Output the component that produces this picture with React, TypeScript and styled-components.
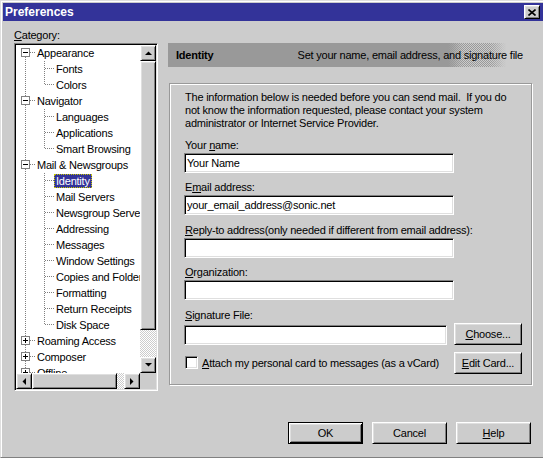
import React from 'react';
import styled, { createGlobalStyle, css } from 'styled-components';

const GlobalStyle = createGlobalStyle`
  html, body {
    margin: 0;
    padding: 0;
    background: #cccccc;
  }
  body {
    font-family: 'Liberation Sans', Arial, sans-serif;
    font-size: 11px;
    letter-spacing: -0.22px;
    color: #000;
  }
`;

const raised = css`
  border: 1px solid;
  border-color: #fff #000 #000 #fff;
  box-shadow: inset 1px 1px #dfdfdf, inset -1px -1px #808080;
`;

const sunken = css`
  border: 1px solid;
  border-color: #808080 #fff #fff #808080;
  box-shadow: inset 1px 1px #000, inset -1px -1px #dfdfdf;
`;

const checker = (a: string, b: string) => css`
  background-color: ${a};
  background-image: repeating-conic-gradient(${a} 0 25%, ${b} 0 50%);
  background-size: 2px 2px;
`;

const Window = styled.div`
  width: 543px;
  height: 458px;
  box-sizing: border-box;
  background: #cccccc;
  border-top: 1px solid #dfdfdf;
  border-left: 1px solid #dfdfdf;
  border-bottom: 1px solid #808080;
  box-shadow: inset 1px 1px #fff;
  padding: 2px 0 0 2px;
  display: flex;
  flex-direction: column;
  overflow: hidden;
`;

const TitleBar = styled.div`
  height: 18px;
  flex: 0 0 18px;
  background: #333399;
  display: flex;
  align-items: center;
  justify-content: space-between;
  padding: 0 3px 0 2px;
`;

const Title = styled.span`
  color: #fff;
  font-weight: bold;
  font-size: 12px;
  letter-spacing: 0;
`;

const CloseButton = styled.div`
  ${raised};
  width: 16px;
  height: 14px;
  box-sizing: border-box;
  background: #cccccc;
  display: flex;
  align-items: center;
  justify-content: center;
`;

const Body = styled.div`
  display: grid;
  grid-template-columns: 144px 364px;
  grid-template-rows: 14px 348px;
  column-gap: 10px;
  padding: 8px 0 0 11px;
`;

const CategoryLabel = styled.div`
  line-height: 13px;
`;

const Mnemonic = styled.u`
  text-decoration-thickness: 1px;
  text-underline-offset: 1px;
`;

/* ---------- category tree ---------- */

const TreeBox = styled.div`
  ${sunken};
  box-sizing: border-box;
  width: 144px;
  height: 348px;
  padding: 1px;
  display: grid;
  grid-template-columns: 124px 16px;
  grid-template-rows: 328px 16px;
`;

const TreeViewport = styled.div`
  background: #fff;
  overflow: hidden;
`;

const TreeRow = styled.div`
  height: 16px;
  display: flex;
  align-items: center;
  white-space: nowrap;
`;

const TreeLabel = styled.span<{ $selected?: boolean }>`
  padding: 0 2px;
  line-height: 14px;
  ${(p) =>
    p.$selected &&
    css`
      background: #333399;
      color: #fff;
      outline: 1px dotted #c8c800;
      outline-offset: -1px;
    `}
`;

const VScroll = styled.div`
  display: flex;
  flex-direction: column;
`;

const HScroll = styled.div`
  display: flex;
`;

const ArrowButton = styled.div`
  ${raised};
  flex: 0 0 16px;
  width: 16px;
  height: 16px;
  box-sizing: border-box;
  background: #cccccc;
  display: flex;
  align-items: center;
  justify-content: center;
`;

const Thumb = styled.div<{ $size: number }>`
  ${raised};
  box-sizing: border-box;
  background: #cccccc;
  flex: 0 0 ${(p) => p.$size}px;
`;

const Track = styled.div`
  flex: 1;
  ${checker('#ffffff', '#cccccc')};
`;

const Corner = styled.div`
  background: #cccccc;
`;

/* ---------- right panel ---------- */

const Panel = styled.div`
  grid-column: 2;
  grid-row: 2;
  display: flex;
  flex-direction: column;
`;

const Header = styled.div`
  position: relative;
  height: 24px;
  display: flex;
  align-items: center;
  justify-content: space-between;
  padding: 0 9px 0 8px;
  background: linear-gradient(to right, #999999 287px, #cccccc 334px);

  &::before {
    content: '';
    position: absolute;
    inset: 0;
    ${checker('#999999', '#cccccc')};
    -webkit-mask-image: linear-gradient(to right, transparent 280px, #000 296px, #000 322px, transparent 338px);
    mask-image: linear-gradient(to right, transparent 280px, #000 296px, #000 322px, transparent 338px);
  }
`;

const HeaderText = styled.span<{ $bold?: boolean }>`
  position: relative;
  font-weight: ${(p) => (p.$bold ? 'bold' : 'normal')};
`;

const GroupBox = styled.div`
  margin: 16px 0 0 1px;
  border: 1px solid #999999;
  box-shadow: inset 1px 1px #fff, 1px 1px #fff;
  padding: 6.5px 9px 10px 14px;
  display: flex;
  flex-direction: column;
`;

const Intro = styled.p`
  margin: 0 0 9px 1px;
  line-height: 13px;
  white-space: nowrap;
`;

const Field = styled.div`
  display: flex;
  flex-direction: column;
  margin-bottom: 8.5px;
`;

const FieldLabel = styled.label`
  display: block;
  line-height: 13px;
  margin: 0 0 1px 1px;
  white-space: nowrap;
`;

const TextBox = styled.input<{ $width: number }>`
  ${sunken};
  box-sizing: border-box;
  width: ${(p) => p.$width}px;
  height: 20px;
  padding: 0 2px;
  margin: 0;
  background: #fff;
  font: inherit;
  letter-spacing: inherit;
  color: #000;
  outline: none;
`;

const InlineRow = styled.div<{ $align?: string; $top?: number }>`
  display: flex;
  align-items: ${(p) => p.$align || 'center'};
  justify-content: space-between;
  margin-top: ${(p) => p.$top || 0}px;
`;

const CheckLabel = styled.label`
  display: flex;
  align-items: center;
  gap: 4px;
  margin-left: 1px;
  white-space: nowrap;
`;

const CheckBox = styled.span`
  ${sunken};
  box-sizing: border-box;
  width: 13px;
  height: 13px;
  background: #fff;
`;

const Button = styled.button<{ $width: number; $default?: boolean }>`
  ${raised};
  box-sizing: border-box;
  width: ${(p) => p.$width}px;
  height: 22px;
  padding: 0;
  background: #cccccc;
  font: inherit;
  letter-spacing: inherit;
  color: #000;
  ${(p) =>
    p.$default &&
    css`
      border: 1px solid #000;
      box-shadow: inset 1px 1px #fff, inset -1px -1px #000, inset 2px 2px #dfdfdf, inset -2px -2px #808080;
    `}
`;

const Footer = styled.div`
  display: flex;
  justify-content: flex-end;
  gap: 9px;
  margin-top: 31px;
  padding-right: 12px;
`;

/* ---------- drawings ---------- */

const Arrow: React.FC<{ dir: 'up' | 'down' | 'left' | 'right' }> = ({ dir }) => {
  const pts = {
    up: '0,4 7,4 3.5,0.5',
    down: '0,0 7,0 3.5,3.5',
    left: '4,0 4,7 0.5,3.5',
    right: '0,0 0,7 3.5,3.5',
  }[dir];
  const vertical = dir === 'up' || dir === 'down';
  return (
    <svg width={vertical ? 7 : 4} height={vertical ? 4 : 7} viewBox={vertical ? '0 0 7 4' : '0 0 4 7'}>
      <polygon points={pts} fill="#000" />
    </svg>
  );
};

const CloseGlyph = () => (
  <svg width="8" height="7" viewBox="0 0 8 7">
    <path d="M0.5 0.5 L7.5 6.5 M7.5 0.5 L0.5 6.5" stroke="#000" strokeWidth="1.6" />
  </svg>
);

type Node = { label: string; level: 0 | 1; state?: 'open' | 'closed'; last?: boolean; selected?: boolean };

const tree: Node[] = [
  { label: 'Appearance', level: 0, state: 'open' },
  { label: 'Fonts', level: 1 },
  { label: 'Colors', level: 1, last: true },
  { label: 'Navigator', level: 0, state: 'open' },
  { label: 'Languages', level: 1 },
  { label: 'Applications', level: 1 },
  { label: 'Smart Browsing', level: 1, last: true },
  { label: 'Mail & Newsgroups', level: 0, state: 'open' },
  { label: 'Identity', level: 1, selected: true },
  { label: 'Mail Servers', level: 1 },
  { label: 'Newsgroup Servers', level: 1 },
  { label: 'Addressing', level: 1 },
  { label: 'Messages', level: 1 },
  { label: 'Window Settings', level: 1 },
  { label: 'Copies and Folders', level: 1 },
  { label: 'Formatting', level: 1 },
  { label: 'Return Receipts', level: 1 },
  { label: 'Disk Space', level: 1, last: true },
  { label: 'Roaming Access', level: 0, state: 'closed' },
  { label: 'Composer', level: 0, state: 'closed' },
  { label: 'Offline', level: 0, state: 'closed' },
];

const dots = { stroke: '#808080', strokeWidth: 1, strokeDasharray: '1 1' };

// dotted connector lines and the +/- box in front of each tree label
const Gutter: React.FC<{ node: Node; first: boolean }> = ({ node, first }) => {
  if (node.level === 0) {
    return (
      <svg width="19" height="16" style={{ flex: '0 0 19px' }}>
        {!first && <line x1="9.5" y1="0" x2="9.5" y2="3" {...dots} />}
        <line x1="9.5" y1="12" x2="9.5" y2="16" {...dots} />
        <line x1="14" y1="7.5" x2="19" y2="7.5" {...dots} />
        <rect x="5.5" y="3.5" width="8" height="8" fill="#fff" stroke="#808080" />
        <line x1="7" y1="7.5" x2="12" y2="7.5" stroke="#000" />
        {node.state === 'closed' && <line x1="9.5" y1="5" x2="9.5" y2="10" stroke="#000" />}
      </svg>
    );
  }
  return (
    <svg width="38" height="16" style={{ flex: '0 0 38px' }}>
      <line x1="9.5" y1="0" x2="9.5" y2="16" {...dots} />
      <line x1="28.5" y1="0" x2="28.5" y2={node.last ? 8 : 16} {...dots} />
      <line x1="29" y1="7.5" x2="38" y2="7.5" {...dots} />
    </svg>
  );
};

const CategoryTree = () => (
  <TreeBox>
    <TreeViewport>
      {tree.map((node, i) => (
        <TreeRow key={node.label}>
          <Gutter node={node} first={i === 0} />
          <TreeLabel $selected={node.selected}>{node.label}</TreeLabel>
        </TreeRow>
      ))}
    </TreeViewport>
    <VScroll>
      <ArrowButton>
        <Arrow dir="up" />
      </ArrowButton>
      <Thumb $size={269} />
      <Track />
      <ArrowButton>
        <Arrow dir="down" />
      </ArrowButton>
    </VScroll>
    <HScroll>
      <ArrowButton>
        <Arrow dir="left" />
      </ArrowButton>
      <Thumb $size={85} />
      <Track />
      <ArrowButton>
        <Arrow dir="right" />
      </ArrowButton>
    </HScroll>
    <Corner />
  </TreeBox>
);

const IdentityPanel = () => (
  <Panel>
    <Header>
      <HeaderText $bold>Identity</HeaderText>
      <HeaderText>Set your name, email address, and signature file</HeaderText>
    </Header>
    <GroupBox>
      <Intro>
        The information below is needed before you can send mail.&nbsp; If you do
        <br />
        not know the information requested, please contact your system
        <br />
        administrator or Internet Service Provider.
      </Intro>
      <Field>
        <FieldLabel>
          Your <Mnemonic>n</Mnemonic>ame:
        </FieldLabel>
        <TextBox $width={270} defaultValue="Your Name" readOnly />
      </Field>
      <Field>
        <FieldLabel>
          E<Mnemonic>m</Mnemonic>ail address:
        </FieldLabel>
        <TextBox $width={270} defaultValue="your_email_address@sonic.net" readOnly />
      </Field>
      <Field>
        <FieldLabel>
          <Mnemonic>R</Mnemonic>eply-to address(only needed if different from email address):
        </FieldLabel>
        <TextBox $width={270} defaultValue="" readOnly />
      </Field>
      <Field>
        <FieldLabel>
          <Mnemonic>O</Mnemonic>rganization:
        </FieldLabel>
        <TextBox $width={270} defaultValue="" readOnly />
      </Field>
      <FieldLabel>
        <Mnemonic>S</Mnemonic>ignature File:
      </FieldLabel>
      <InlineRow $align="flex-end">
        <TextBox $width={263} defaultValue="" readOnly />
        <Button $width={68}>
          <Mnemonic>C</Mnemonic>hoose...
        </Button>
      </InlineRow>
      <InlineRow $top={7}>
        <CheckLabel>
          <CheckBox />
          <span>
            <Mnemonic>A</Mnemonic>ttach my personal card to messages (as a vCard)
          </span>
        </CheckLabel>
        <Button $width={68}>
          <Mnemonic>E</Mnemonic>dit Card...
        </Button>
      </InlineRow>
    </GroupBox>
  </Panel>
);

const App: React.FC = () => (
  <>
    <GlobalStyle />
    <Window>
      <TitleBar>
        <Title>Preferences</Title>
        <CloseButton>
          <CloseGlyph />
        </CloseButton>
      </TitleBar>
      <Body>
        <CategoryLabel>
          <Mnemonic>C</Mnemonic>ategory:
        </CategoryLabel>
        <div />
        <CategoryTree />
        <IdentityPanel />
      </Body>
      <Footer>
        <Button $width={75} $default>
          OK
        </Button>
        <Button $width={75}>Cancel</Button>
        <Button $width={75}>
          <Mnemonic>H</Mnemonic>elp
        </Button>
      </Footer>
    </Window>
  </>
);

export default App;
